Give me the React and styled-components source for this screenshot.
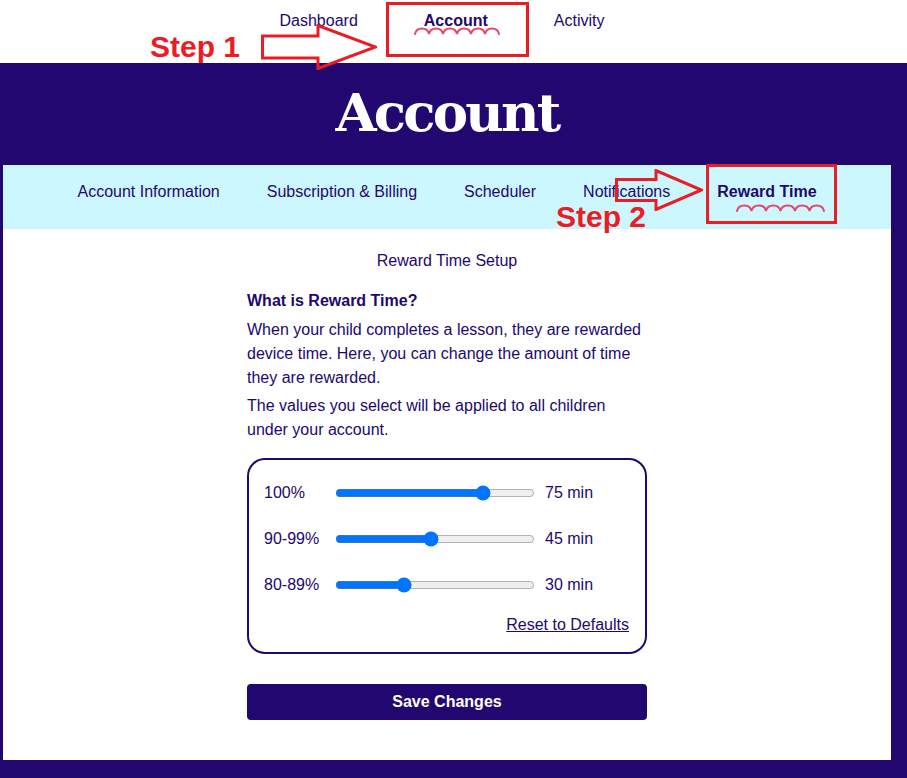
import React, { useState } from 'react';
import styled, { createGlobalStyle } from 'styled-components';

const NAVY = '#22076e';
const BAND = '#230770';
const RED = '#ec1c24';
const PINK = '#e8476a';

const GlobalStyle = createGlobalStyle`
  body {
    margin: 0;
    background: #fff;
    font-family: 'Liberation Sans', Arial, sans-serif;
    color: ${NAVY};
  }
`;

const Page = styled.div`
  position: relative;
  width: 907px;
  min-height: 778px;
  overflow: hidden;
`;

const TopNav = styled.nav`
  height: 63px;
  display: flex;
  justify-content: center;
  padding-right: 23px;
  box-sizing: border-box;
`;

const NavItem = styled.a`
  position: relative;
  padding: 12px 33px 0;
  font-size: 16px;
  line-height: 18px;
  color: ${NAVY};
  font-weight: ${(p) => (p.$active ? 700 : 400)};
  text-decoration: none;
`;

const Squiggle = styled.svg`
  position: absolute;
  left: ${(p) => p.$left}px;
  top: ${(p) => p.$top}px;
`;

const Band = styled.section`
  background: ${BAND};
  padding: 0 16px 18px 3px;
`;

const Title = styled.h1`
  margin: 0;
  height: 102px;
  line-height: 98px;
  text-align: center;
  color: #fff;
  font-family: 'DejaVu Serif', 'Liberation Serif', serif;
  font-weight: 700;
  font-size: 53px;
  letter-spacing: -2.8px;
`;

const TabBar = styled.div`
  height: 64px;
  background: #ccf7fe;
  display: flex;
  justify-content: center;
  gap: 47px;
  padding-top: 18px;
  box-sizing: border-box;
`;

const Tab = styled.a`
  position: relative;
  font-size: 16px;
  line-height: 18px;
  height: 18px;
  color: ${NAVY};
  font-weight: ${(p) => (p.$active ? 700 : 400)};
  text-decoration: none;
  white-space: nowrap;
`;

const Panel = styled.div`
  background: #fff;
`;

const Content = styled.div`
  width: 400px;
  margin: 0 auto;
  padding: 22px 0 40px;
`;

const SetupTitle = styled.h2`
  margin: 0;
  font-size: 16px;
  font-weight: 400;
  line-height: 20px;
  text-align: center;
`;

const Heading = styled.h3`
  margin: 20px 0 0;
  font-size: 16px;
  font-weight: 700;
  line-height: 20px;
`;

const Para = styled.p`
  margin: ${(p) => p.$gap}px 0 0;
  font-size: 16px;
  line-height: 24px;
`;

const Card = styled.div`
  margin-top: 16px;
  border: 2px solid ${NAVY};
  border-radius: 18px;
  padding: 18px 16px 17px 15px;
  display: flex;
  flex-direction: column;
  gap: 16px;
`;

const Row = styled.div`
  height: 30px;
  display: flex;
  align-items: center;
  font-size: 16px;
`;

const RowLabel = styled.span`
  width: 71px;
`;

const Slider = styled.input`
  width: 200px;
  margin: 0;
  accent-color: #0075ff;
`;

const RowValue = styled.span`
  margin-left: 10px;
`;

const ResetRow = styled.div`
  margin-top: -1px;
  text-align: right;
  line-height: 20px;
`;

const ResetLink = styled.a`
  font-size: 16px;
  color: ${NAVY};
  text-decoration: underline;
  cursor: pointer;
`;

const SaveButton = styled.button`
  margin-top: 30px;
  width: 100%;
  height: 36px;
  border: none;
  border-radius: 4px;
  background: ${BAND};
  color: #fff;
  font-family: 'Liberation Sans', Arial, sans-serif;
  font-size: 16px;
  font-weight: 700;
`;

const Callout = styled.div`
  position: absolute;
  left: ${(p) => p.$x}px;
  top: ${(p) => p.$y}px;
  width: ${(p) => p.$w}px;
  height: ${(p) => p.$h}px;
  border: 3px solid ${RED};
  box-sizing: border-box;
  pointer-events: none;
`;

const StepLabel = styled.span`
  position: absolute;
  left: ${(p) => p.$x}px;
  top: ${(p) => p.$y}px;
  font-family: 'Liberation Sans', Arial, sans-serif;
  font-size: 30px;
  line-height: 30px;
  font-weight: 700;
  color: ${RED};
  pointer-events: none;
`;

const ArrowSvg = styled.svg`
  position: absolute;
  left: ${(p) => p.$x}px;
  top: ${(p) => p.$y}px;
  pointer-events: none;
`;

// active-link squiggle: a row of small arches
function Wave({ left, top, width, hump = 14 }) {
  const count = Math.floor((width - 2) / hump);
  let d = `M1 8`;
  for (let i = 0; i < count; i++) {
    const x = 1 + i * hump;
    d += ` C${x + 1.5} 0.5 ${x + hump - 1.5} 0.5 ${x + hump} 8`;
  }
  return (
    <Squiggle $left={left} $top={top} width={width} height="10" viewBox={`0 0 ${width} 10`}>
      <path d={d} fill="none" stroke={PINK} strokeWidth="2" strokeLinecap="round" />
    </Squiggle>
  );
}

function Arrow({ x, y, w, h, shaft, headAt }) {
  const mid = h / 2;
  const pts = [
    [1.5, mid - shaft / 2],
    [headAt, mid - shaft / 2],
    [headAt, 1.5],
    [w - 1.5, mid],
    [headAt, h - 1.5],
    [headAt, mid + shaft / 2],
    [1.5, mid + shaft / 2],
  ];
  return (
    <ArrowSvg $x={x} $y={y} width={w} height={h}>
      <polygon
        points={pts.map((p) => p.join(',')).join(' ')}
        fill="none"
        stroke={RED}
        strokeWidth="3"
        strokeLinejoin="miter"
      />
    </ArrowSvg>
  );
}

const tabs = [
  'Account Information',
  'Subscription & Billing',
  'Scheduler',
  'Notifications',
  'Reward Time',
];

const initialRewards = [
  { label: '100%', minutes: 75 },
  { label: '90-99%', minutes: 45 },
  { label: '80-89%', minutes: 30 },
];

export default function App() {
  const [rewards, setRewards] = useState(initialRewards);

  const update = (i, v) =>
    setRewards((r) => r.map((item, j) => (j === i ? { ...item, minutes: v } : item)));

  return (
    <Page>
      <GlobalStyle />
      <TopNav>
        <NavItem href="#">Dashboard</NavItem>
        <NavItem href="#" $active>
          Account
          <Wave left={23} top={26} width={86} />
        </NavItem>
        <NavItem href="#">Activity</NavItem>
      </TopNav>

      <Band>
        <Title>Account</Title>
        <Panel>
          <TabBar>
            {tabs.map((t) => (
              <Tab key={t} href="#" $active={t === 'Reward Time'}>
                {t}
                {t === 'Reward Time' && <Wave left={19} top={20} width={90} hump={14.5} />}
              </Tab>
            ))}
          </TabBar>

          <Content>
            <SetupTitle>Reward Time Setup</SetupTitle>
            <Heading>What is Reward Time?</Heading>
            <Para $gap={7}>
              When your child completes a lesson, they are rewarded device time. Here, you can
              change the amount of time they are rewarded.
            </Para>
            <Para $gap={4}>
              The values you select will be applied to all children under your account.
            </Para>

            <Card>
              {rewards.map((r, i) => (
                <Row key={r.label}>
                  <RowLabel>{r.label}</RowLabel>
                  <Slider
                    type="range"
                    min={-5}
                    max={100}
                    step={5}
                    value={r.minutes}
                    onChange={(e) => update(i, Number(e.target.value))}
                  />
                  <RowValue>{r.minutes} min</RowValue>
                </Row>
              ))}
              <ResetRow>
                <ResetLink onClick={() => setRewards(initialRewards)}>Reset to Defaults</ResetLink>
              </ResetRow>
            </Card>

            <SaveButton>Save Changes</SaveButton>
          </Content>
        </Panel>
      </Band>

      <Callout $x={386} $y={2} $w={143} $h={55} />
      <StepLabel $x={150} $y={32}>Step 1</StepLabel>
      <Arrow x={261} y={24} w={116} h={46} shaft={22} headAt={57} />

      <Callout $x={706} $y={164} $w={131} $h={60} />
      <StepLabel $x={556} $y={202}>Step 2</StepLabel>
      <Arrow x={615} y={169} w={88} h={42} shaft={21} headAt={41} />
    </Page>
  );
}
